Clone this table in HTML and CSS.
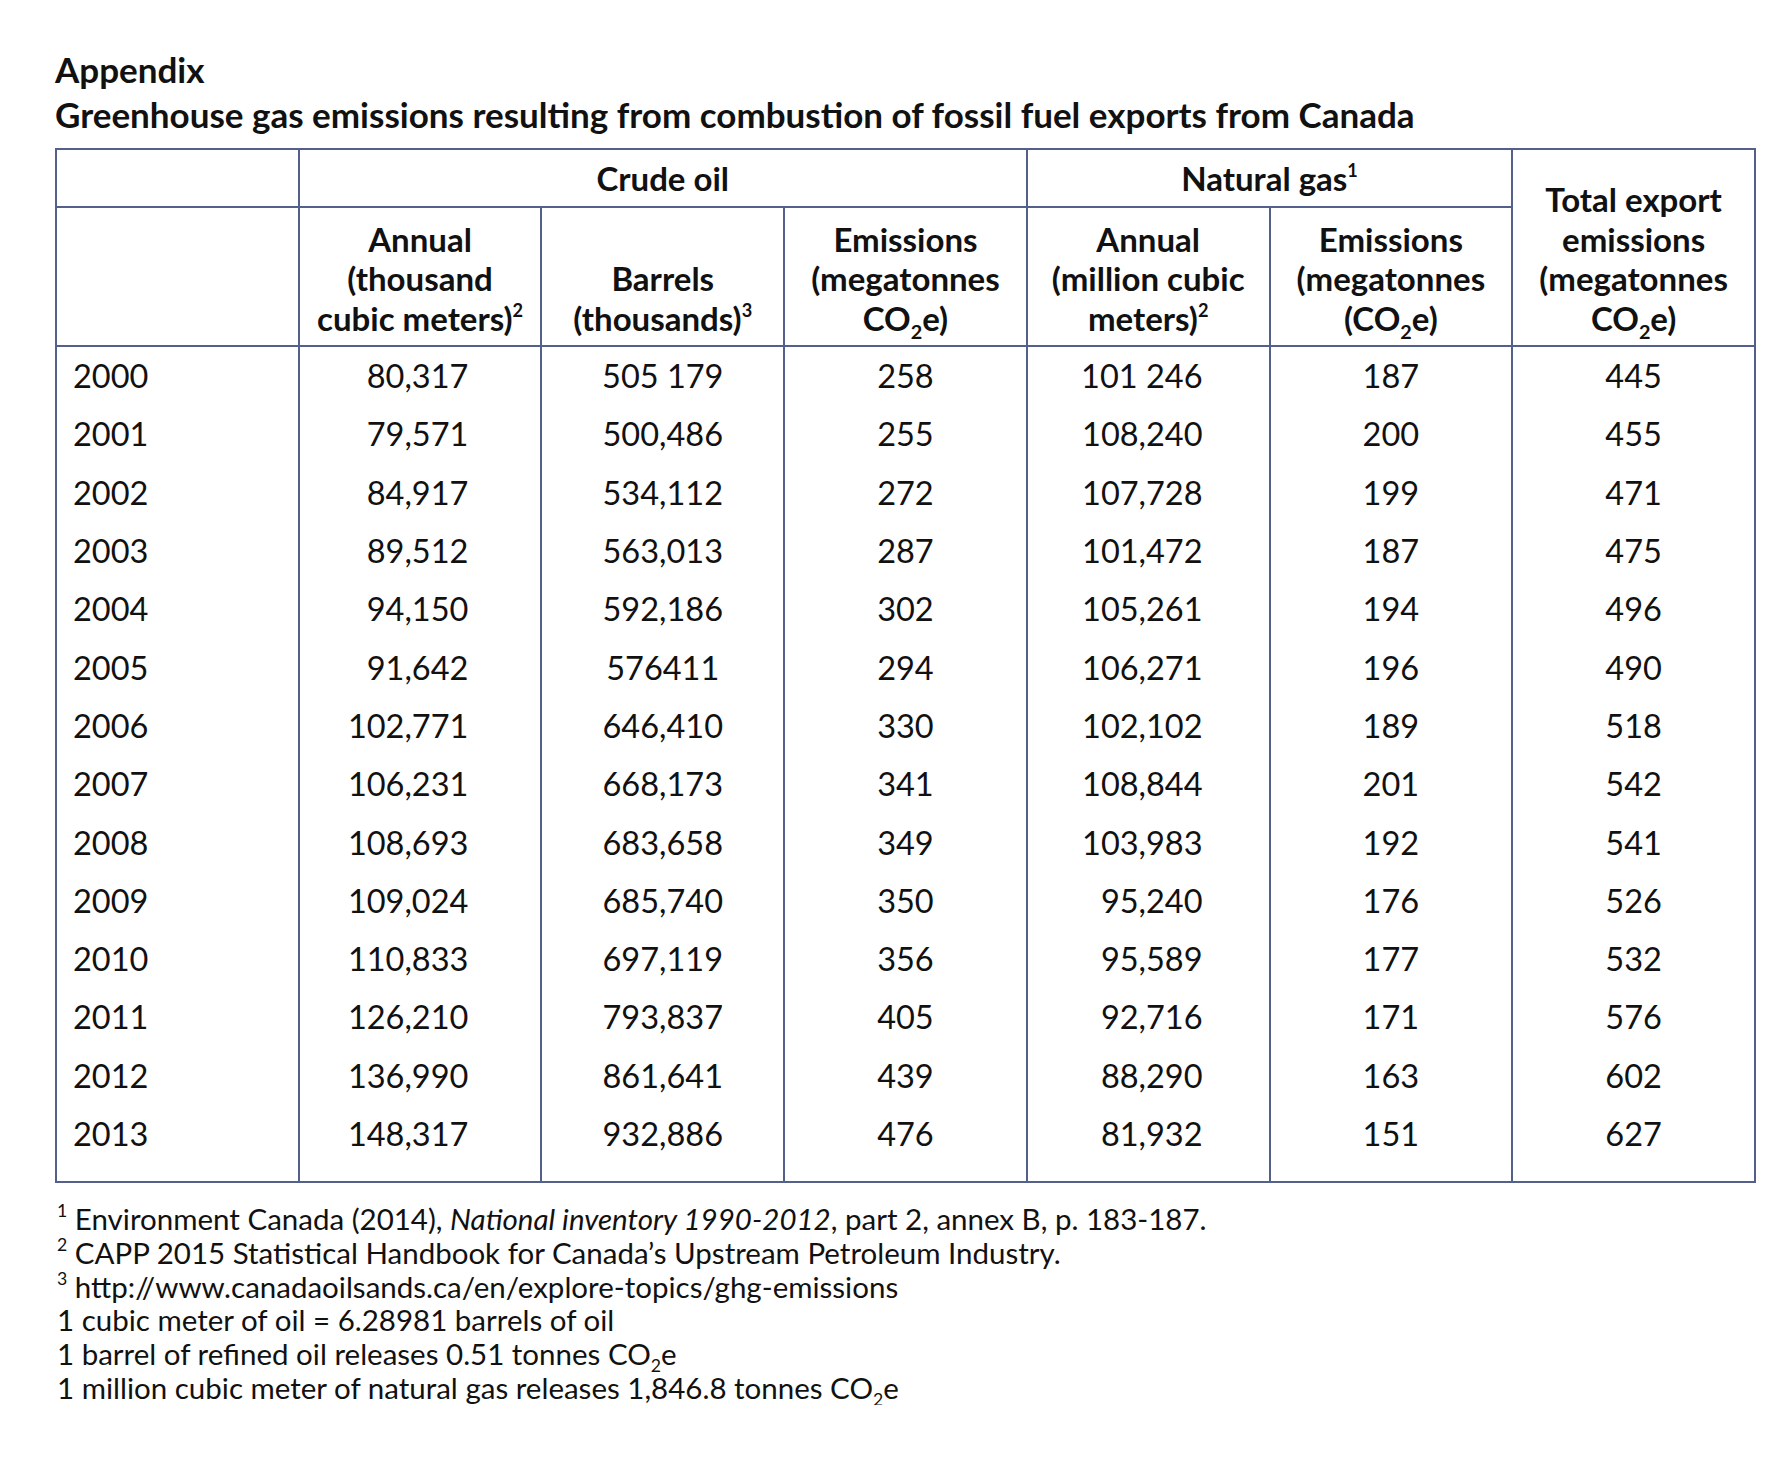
FILE: index.html
```html
<!DOCTYPE html>
<html lang="en">
<head>
<meta charset="utf-8">
<title>Appendix</title>
<link rel="stylesheet" href="styles.css">
</head>
<body>
<div class="page">
  <h1 class="title">
    <span class="title-line">Appendix</span>
    <span class="title-line">Greenhouse gas emissions resulting from combustion of fossil fuel exports from Canada</span>
  </h1>
  <table class="data">
    <colgroup>
      <col class="c"><col class="c"><col class="c"><col class="c"><col class="c"><col class="c"><col class="c">
    </colgroup>
    <thead>
      <tr class="group-row">
        <th></th>
        <th colspan="3">Crude oil</th>
        <th colspan="2">Natural gas<sup>1</sup></th>
        <th rowspan="2" class="sub-head">Total export<br>emissions<br>(megatonnes<br>CO<sub>2</sub>e)</th>
      </tr>
      <tr class="sub-row">
        <th class="sub-head"></th>
        <th class="sub-head">Annual<br>(thousand<br>cubic meters)<sup>2</sup></th>
        <th class="sub-head">Barrels<br>(thousands)<sup>3</sup></th>
        <th class="sub-head">Emissions<br>(megatonnes<br>CO<sub>2</sub>e)</th>
        <th class="sub-head">Annual<br>(million cubic<br>meters)<sup>2</sup></th>
        <th class="sub-head">Emissions<br>(megatonnes<br>(CO<sub>2</sub>e)</th>
      </tr>
    </thead>
    <tbody>
      <tr><td class="yr">2000</td><td class="ra oil">80,317</td><td>505 179</td><td>258</td><td class="ra gas">101 246</td><td>187</td><td>445</td></tr>
      <tr><td class="yr">2001</td><td class="ra oil">79,571</td><td>500,486</td><td>255</td><td class="ra gas">108,240</td><td>200</td><td>455</td></tr>
      <tr><td class="yr">2002</td><td class="ra oil">84,917</td><td>534,112</td><td>272</td><td class="ra gas">107,728</td><td>199</td><td>471</td></tr>
      <tr><td class="yr">2003</td><td class="ra oil">89,512</td><td>563,013</td><td>287</td><td class="ra gas">101,472</td><td>187</td><td>475</td></tr>
      <tr><td class="yr">2004</td><td class="ra oil">94,150</td><td>592,186</td><td>302</td><td class="ra gas">105,261</td><td>194</td><td>496</td></tr>
      <tr><td class="yr">2005</td><td class="ra oil">91,642</td><td>576411</td><td>294</td><td class="ra gas">106,271</td><td>196</td><td>490</td></tr>
      <tr><td class="yr">2006</td><td class="ra oil">102,771</td><td>646,410</td><td>330</td><td class="ra gas">102,102</td><td>189</td><td>518</td></tr>
      <tr><td class="yr">2007</td><td class="ra oil">106,231</td><td>668,173</td><td>341</td><td class="ra gas">108,844</td><td>201</td><td>542</td></tr>
      <tr><td class="yr">2008</td><td class="ra oil">108,693</td><td>683,658</td><td>349</td><td class="ra gas">103,983</td><td>192</td><td>541</td></tr>
      <tr><td class="yr">2009</td><td class="ra oil">109,024</td><td>685,740</td><td>350</td><td class="ra gas">95,240</td><td>176</td><td>526</td></tr>
      <tr><td class="yr">2010</td><td class="ra oil">110,833</td><td>697,119</td><td>356</td><td class="ra gas">95,589</td><td>177</td><td>532</td></tr>
      <tr><td class="yr">2011</td><td class="ra oil">126,210</td><td>793,837</td><td>405</td><td class="ra gas">92,716</td><td>171</td><td>576</td></tr>
      <tr><td class="yr">2012</td><td class="ra oil">136,990</td><td>861,641</td><td>439</td><td class="ra gas">88,290</td><td>163</td><td>602</td></tr>
      <tr class="last"><td class="yr">2013</td><td class="ra oil">148,317</td><td>932,886</td><td>476</td><td class="ra gas">81,932</td><td>151</td><td>627</td></tr>
    </tbody>
  </table>
  <div class="notes">
    <p><sup>1</sup> Environment Canada (2014), <i>National inventory 1990-2012</i>, part 2, annex B, p. 183-187.</p>
    <p><sup>2</sup> CAPP 2015 Statistical Handbook for Canada’s Upstream Petroleum Industry.</p>
    <p><sup>3</sup> http://www.canadaoilsands.ca/en/explore-topics/ghg-emissions</p>
    <p>1 cubic meter of oil = 6.28981 barrels of oil</p>
    <p>1 barrel of refined oil releases 0.51 tonnes CO<sub>2</sub>e</p>
    <p>1 million cubic meter of natural gas releases 1,846.8 tonnes CO<sub>2</sub>e</p>
  </div>
</div>
</body>
</html>
```

FILE: styles.css
```css
html, body {
  margin: 0;
  padding: 0;
  background: #ffffff;
}

body {
  font-family: Lato, "Open Sans", "DejaVu Sans", sans-serif;
  color: #111111;
}

.page {
  padding: 47px 0 0 55px;
}

.title {
  margin: 0 0 12px 0;
  font-size: 35px;
  font-weight: 700;
  line-height: 44.6px;
  display: flex;
  flex-direction: column;
}

.data {
  border-collapse: collapse;
  table-layout: fixed;
  width: 1701px;
  border: 2px solid #53608c;
  font-size: 32.5px;
}

.data th,
.data td {
  border-left: 2px solid #53608c;
  border-right: 2px solid #53608c;
  padding: 0;
}

.data th {
  font-size: 33px;
  font-weight: 700;
  border-top: 2px solid #53608c;
  border-bottom: 2px solid #53608c;
  text-align: center;
}

.group-row th {
  height: 56px;
  vertical-align: middle;
}

.data th.sub-head {
  vertical-align: bottom;
  line-height: 39.5px;
  padding-bottom: 7px;
}

.sub-row th {
  height: 130px;
}

.data td {
  height: 58.3px;
  line-height: 58.3px;
  text-align: center;
  font-weight: 400;
}

.data tr.last td {
  vertical-align: top;
  height: 76px;
}

.data td.yr {
  text-align: left;
  padding-left: 16px;
}

.data td.oil {
  text-align: right;
  padding-right: 72px;
}

.data td.gas {
  text-align: right;
  padding-right: 66px;
}

sup {
  font-size: 0.55em;
  line-height: 0;
  vertical-align: 0.75em;
}

sub {
  font-size: 0.6em;
  line-height: 0;
  vertical-align: -0.4em;
}

.notes {
  margin-top: 19px;
  padding-left: 2px;
  font-size: 29.5px;
  line-height: 33.8px;
}

.notes p {
  margin: 0;
}

.notes sup {
  font-size: 0.6em;
}
```
